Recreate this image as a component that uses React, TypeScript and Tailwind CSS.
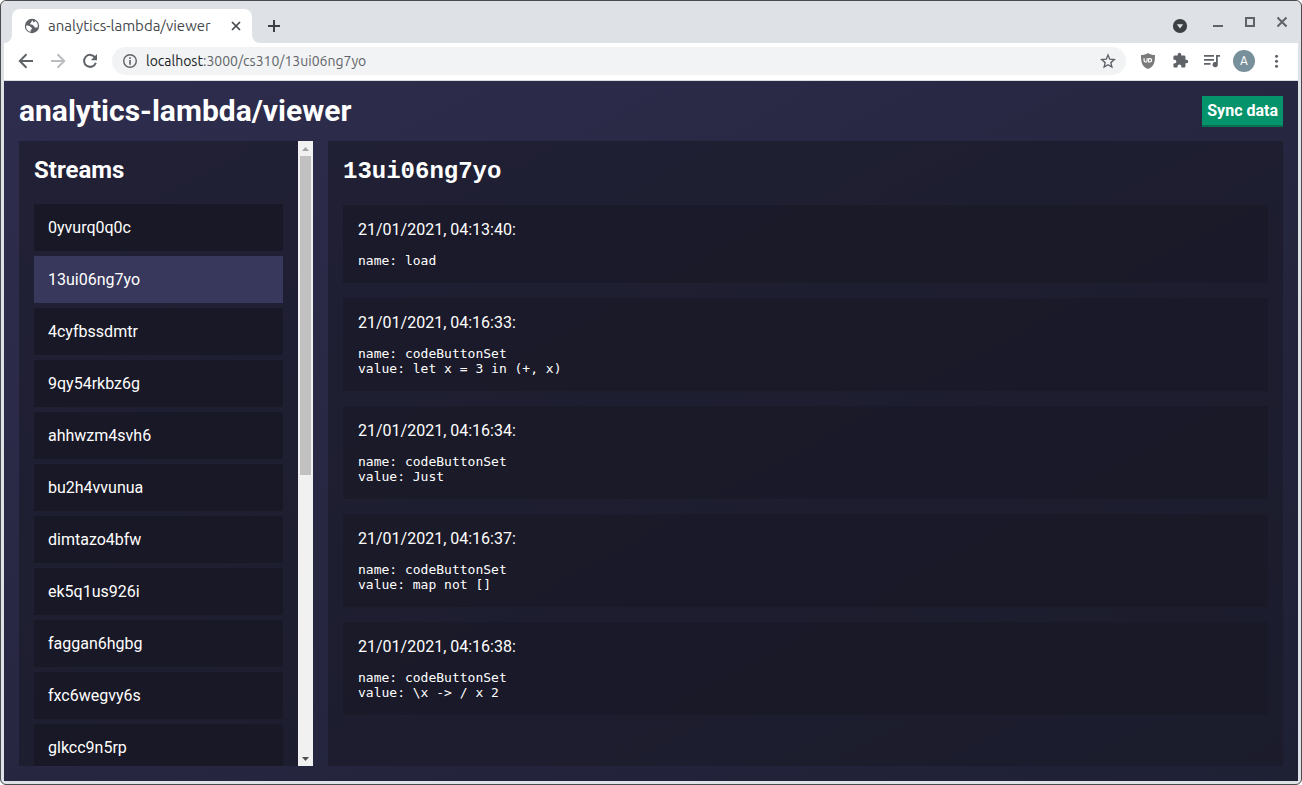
import type { ReactNode } from "react";

const streams = [
  "0yvurq0q0c",
  "13ui06ng7yo",
  "4cyfbssdmtr",
  "9qy54rkbz6g",
  "ahhwzm4svh6",
  "bu2h4vvunua",
  "dimtazo4bfw",
  "ek5q1us926i",
  "faggan6hgbg",
  "fxc6wegvy6s",
  "glkcc9n5rp",
];

const activeStream = "13ui06ng7yo";

const events = [
  { time: "21/01/2021, 04:13:40:", body: "name: load" },
  { time: "21/01/2021, 04:16:33:", body: "name: codeButtonSet\nvalue: let x = 3 in (+, x)" },
  { time: "21/01/2021, 04:16:34:", body: "name: codeButtonSet\nvalue: Just" },
  { time: "21/01/2021, 04:16:37:", body: "name: codeButtonSet\nvalue: map not []" },
  { time: "21/01/2021, 04:16:38:", body: "name: codeButtonSet\nvalue: \\x -> / x 2" },
];

function IconButton({ label, className = "", children }: { label: string; className?: string; children: ReactNode }) {
  return (
    <button type="button" aria-label={label} className={`flex shrink-0 items-center justify-center ${className}`}>
      {children}
    </button>
  );
}

function TabStrip() {
  return (
    <div className="flex h-[42px] shrink-0 items-end bg-[#dee1e6] pl-2">
      <div className="relative flex h-[34px] w-60 items-center rounded-t-lg bg-white pr-2.5 pl-3">
        <svg className="absolute bottom-0 -left-2" width="8" height="8" viewBox="0 0 8 8" fill="#fff">
          <path d="M8 0v8H0a8 8 0 0 0 8-8z" />
        </svg>
        <svg className="absolute -right-2 bottom-0" width="8" height="8" viewBox="0 0 8 8" fill="#fff">
          <path d="M0 0v8h8a8 8 0 0 1-8-8z" />
        </svg>
        <svg width="16" height="16" viewBox="0 0 16 16" className="shrink-0">
          <circle cx="8" cy="8" r="7.2" fill="#5f6368" />
          <path
            fill="#fff"
            d="M8.6 2.1C9.600 2.100 8 3.200 7.200 3.700C6.900 4.300 7.400 4.700 6.700 5.100C5.900 5.400 6 6.100 6.500 6.600C7.700 6.900 9 6.500 9.400 7.700C10.200 7.900 10.800 8.800 10.600 9.600C11.300 9.700 12.200 9.300 13.600 9.500A6 6 0 0 0 11.200 3.100C10.600 3.700 10.300 4.500 9.700 4.400C9 4.200 9.300 3.100 8.600 2.100zM2.100 7.600C3.800 7.600 5.500 7.700 6.200 8.600C6.400 9.600 7.900 9.400 8 10.500C8 11.500 6.700 11.500 6.600 12.400C6.500 13 6.600 13.500 6.700 13.900A6 6 0 0 1 2.100 7.600z"
          />
        </svg>
        <span className="ml-2 flex-1 whitespace-nowrap font-['Ubuntu','Noto_Sans',sans-serif] text-[15px] text-[#45494d]">
          analytics-lambda/viewer
        </span>
        <IconButton label="Close tab" className="size-3">
          <svg width="12" height="12" viewBox="0 0 12 12" stroke="#45494d" strokeWidth="1.7">
            <path d="M2 2l8 8M10 2l-8 8" />
          </svg>
        </IconButton>
      </div>
      <IconButton label="New tab" className="ml-2 h-[34px] w-7">
        <svg width="14" height="14" viewBox="0 0 14 14" stroke="#3c4043" strokeWidth="2">
          <path d="M7 1v12M1 7h12" />
        </svg>
      </IconButton>
      <div className="ml-auto flex h-full items-center gap-4 pr-2">
        <IconButton label="Search tabs" className="mt-2 mr-1.5 size-4">
          <svg width="16" height="16" viewBox="0 0 16 16">
            <circle cx="8" cy="8" r="7.100" fill="#3c4043" />
            <path d="M4.800 6.200h6.400L8 10.400z" fill="#dee1e6" />
          </svg>
        </IconButton>
        <IconButton label="Minimise" className="size-4">
          <svg width="16" height="16" viewBox="0 0 16 16" fill="#5f6368">
            <path d="M3 11h10v2H3z" />
          </svg>
        </IconButton>
        <IconButton label="Maximise" className="size-4">
          <svg width="16" height="16" viewBox="0 0 16 16" fill="none" stroke="#5f6368" strokeWidth="2">
            <path d="M4 4h8v8H4z" />
          </svg>
        </IconButton>
        <IconButton label="Close window" className="size-4">
          <svg width="16" height="16" viewBox="0 0 16 16" stroke="#5f6368" strokeWidth="2">
            <path d="M3.500 3.500l9 9M12.500 3.500l-9 9" />
          </svg>
        </IconButton>
      </div>
    </div>
  );
}

function Toolbar() {
  return (
    <div className="flex h-[38px] shrink-0 items-center border-b border-[#dadce0] bg-white px-3.5 pb-0.5">
      <div className="flex items-center gap-4">
        <IconButton label="Back" className="size-4">
          <svg width="16" height="16" viewBox="0 0 16 16" fill="none" stroke="#5f6368" strokeWidth="2">
            <path d="M15 8H2M8.500 1.300L1.800 8l6.700 6.700" />
          </svg>
        </IconButton>
        <IconButton label="Forward" className="size-4">
          <svg width="16" height="16" viewBox="0 0 16 16" fill="none" stroke="#babcbe" strokeWidth="2">
            <path d="M1 8h13M7.500 1.300L14.200 8l-6.700 6.700" />
          </svg>
        </IconButton>
        <IconButton label="Reload" className="size-4">
          <svg width="16" height="16" viewBox="0 0 16 16">
            <path d="M13.200 4.700A6 6 0 1 0 13.800 9.700" fill="none" stroke="#5f6368" strokeWidth="2" />
            <path d="M15 1v6.200H8.800z" fill="#5f6368" />
          </svg>
        </IconButton>
      </div>
      <div className="ml-3.5 flex h-7 flex-1 items-center rounded-full bg-[#f1f3f4] px-2.5">
        <svg width="16" height="16" viewBox="0 0 16 16" className="shrink-0">
          <circle cx="8" cy="8" r="6.300" fill="none" stroke="#5f6368" strokeWidth="1.400" />
          <path d="M7.200 4.300h1.600v1.600H7.200zM7.200 7.100h1.600v4.700H7.200z" fill="#5f6368" />
        </svg>
        <span className="ml-2 flex-1 font-['Ubuntu','Noto_Sans',sans-serif] text-sm whitespace-nowrap text-[#5f6368]">
          <span className="text-[#202124]">localhost</span>:3000/cs310/13ui06ng7yo
        </span>
        <IconButton label="Bookmark this page" className="size-4">
          <svg width="16" height="16" viewBox="0 0 16 16" fill="none" stroke="#5f6368" strokeWidth="1.400">
            <path d="M8 2l1.750 4.200 4.550.4-3.450 3 1.030 4.450L8 11.700l-3.880 2.350L5.150 9.600l-3.450-3 4.550-.4z" />
          </svg>
        </IconButton>
      </div>
      <div className="ml-3.5 flex items-center gap-4">
        <IconButton label="uBlock" className="size-4">
          <svg width="16" height="16" viewBox="0 0 16 16">
            <path d="M8 0c2 1.400 4.500 2 7 2 0 7-.6 11.500-7 14C1.600 13.500 1 9 1 2c2.500 0 5-.6 7-2z" fill="#7b7b7b" />
            <path
              d="M4.100 5.200v2.300a1.500 1.500 0 0 0 3 0V5.200M8.600 9.500V5.200M8.600 5.700h1.300a1.600 1.600 0 0 1 0 3.300H8.600"
              fill="none"
              stroke="#fff"
              strokeWidth="1.200"
            />
          </svg>
        </IconButton>
        <IconButton label="Extensions" className="size-4">
          <svg width="17" height="17" viewBox="0 0 24 24" fill="#5f6368" className="shrink-0">
            <path d="M20.500 11H19V7c0-1.100-.9-2-2-2h-4V3.500a2.500 2.500 0 0 0-5 0V5H4c-1.100 0-1.990.9-1.990 2v3.800H3.500c1.490 0 2.700 1.210 2.700 2.700s-1.210 2.700-2.700 2.700H2V20c0 1.100.9 2 2 2h3.800v-1.500c0-1.490 1.210-2.700 2.700-2.700s2.700 1.210 2.700 2.700V22H17c1.100 0 2-.9 2-2v-4h1.500a2.500 2.500 0 0 0 0-5z" />
          </svg>
        </IconButton>
        <IconButton label="Media controls" className="size-4">
          <svg width="16" height="16" viewBox="0 0 16 16" fill="#5f6368">
            <path d="M0 2h10v1.700H0zM0 6h10v1.700H0zM0 10h6.500v1.700H0zM12 2h4v1.700h-2.200v7.800a2.600 2.600 0 1 1-1.800-2.400z" />
          </svg>
        </IconButton>
        <button
          type="button"
          aria-label="Profile"
          className="-mx-[3px] flex size-[22px] items-center justify-center rounded-full bg-[#78909c] font-['Roboto',sans-serif] text-xs text-white"
        >
          A
        </button>
        <IconButton label="Menu" className="size-4">
          <svg width="16" height="16" viewBox="0 0 16 16" fill="#5f6368">
            <circle cx="8.500" cy="3.200" r="1.500" />
            <circle cx="8.500" cy="8.200" r="1.500" />
            <circle cx="8.500" cy="13.200" r="1.500" />
          </svg>
        </IconButton>
      </div>
    </div>
  );
}

function ScrollBar() {
  return (
    <div className="flex w-[15px] shrink-0 flex-col bg-[#f1f1f1]">
      <IconButton label="Scroll up" className="h-[15px] w-full">
        <svg width="7" height="4" viewBox="0 0 7 4" fill="#a3a3a3">
          <path d="M3.500 0L7 4H0z" />
        </svg>
      </IconButton>
      <div className="flex-1 px-0.5">
        <div className="h-15/28 bg-[#c1c1c1]" />
      </div>
      <IconButton label="Scroll down" className="h-[15px] w-full">
        <svg width="7" height="4" viewBox="0 0 7 4" fill="#505050">
          <path d="M0 0h7L3.500 4z" />
        </svg>
      </IconButton>
    </div>
  );
}

function Sidebar() {
  return (
    <aside className="flex w-[294px] shrink-0 overflow-hidden bg-[#191926]/60">
      <div className="min-w-0 flex-1 overflow-hidden p-[15px]">
        <h2 className="mb-5 text-2xl leading-7 font-bold">Streams</h2>
        <nav className="flex flex-col gap-[5px]">
          {streams.map((id) => (
            <a
              key={id}
              href={`#${id}`}
              className={`block p-3.5 leading-[19px] ${id === activeStream ? "bg-[#38375c]" : "bg-[#191826]"}`}
            >
              {id}
            </a>
          ))}
        </nav>
      </div>
      <ScrollBar />
    </aside>
  );
}

function StreamView() {
  return (
    <main className="min-w-0 flex-1 overflow-hidden bg-[#191926]/60 p-[15px]">
      <h2 className="mb-[18px] font-['Courier_10_Pitch','Courier_New','Liberation_Mono',monospace] text-2xl leading-[31px] font-bold">
        {activeStream}
      </h2>
      <div className="flex flex-col gap-[15px]">
        {events.map((event) => (
          <article key={event.time} className="bg-[#191826]/70 p-[15px]">
            <p className="leading-[19px]">{event.time}</p>
            <pre className="mt-3.5 font-['DejaVu_Sans_Mono',monospace] text-[13px] leading-[15px]">{event.body}</pre>
          </article>
        ))}
      </div>
    </main>
  );
}

export default function App() {
  return (
    <div className="h-screen bg-white">
      <div className="flex h-full flex-col overflow-hidden rounded-md border border-[#4b4a4d] bg-[#dee1e6] px-[3px] pb-[3px]">
        <TabStrip />
        <Toolbar />
        <div className="flex min-h-0 flex-1 flex-col bg-linear-to-br from-[#2f2d4e] to-[#1e2034] p-[15px] font-['Roboto',sans-serif] text-base text-white">
          <header className="mb-3.5 flex shrink-0 items-start justify-between">
            <h1 className="text-[30px] leading-[29px] font-bold">analytics-lambda/viewer</h1>
            <button type="button" className="border-b-2 border-[#04704f] bg-[#04936b] p-[5px] leading-[19px] font-bold">
              Sync data
            </button>
          </header>
          <div className="flex min-h-0 flex-1 gap-[15px]">
            <Sidebar />
            <StreamView />
          </div>
        </div>
      </div>
    </div>
  );
}
